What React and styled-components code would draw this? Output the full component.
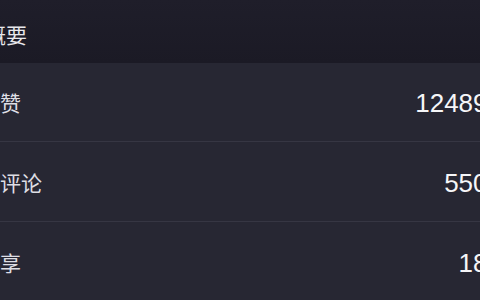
import React from "react";
import styled, { createGlobalStyle } from "styled-components";

const GlobalStyle = createGlobalStyle`
  html, body {
    margin: 0;
    padding: 0;
    background: #262632;
    overflow: hidden;
  }
  body {
    font-family: "Liberation Sans", "Noto Sans CJK SC", sans-serif;
  }
`;

const Panel = styled.div`
  margin-left: -21px;
  width: 523px;
  height: 300px;
  display: flex;
  flex-direction: column;
  background: #262632;
`;

const Header = styled.div`
  height: 63px;
  flex: none;
  display: flex;
  align-items: center;
  padding: 4px 0 0 6px;
  box-sizing: border-box;
  background: linear-gradient(#1f1e2a, #1b1a25);
  color: #e8e8ec;
  font-family: "Noto Sans CJK SC", sans-serif;
  font-size: 21px;
`;

const Row = styled.div`
  height: ${props => props.h || 79}px;
  flex: none;
  box-sizing: border-box;
  display: flex;
  align-items: center;
  justify-content: space-between;
  border-bottom: 1px solid #363643;
  background: #272733;
`;

const Label = styled.span`
  font-family: "Noto Sans CJK SC", sans-serif;
  font-size: 21px;
  color: #dedee4;
`;

const Value = styled.span`
  font-family: "Liberation Sans", sans-serif;
  font-size: 26px;
  color: #f6f6f8;
  margin-top: 3px;
`;

const stats = [
  { label: "点赞", value: "124896", h: 79 },
  { label: "总评论", value: "5503", h: 80 },
  { label: "分享", value: "186", h: 80 }
];

export default function App() {
  return (
    <>
      <GlobalStyle />
      <Panel>
        <Header>概要</Header>
        {stats.map(s => (
          <Row key={s.label} h={s.h}>
            <Label>{s.label}</Label>
            <Value>{s.value}</Value>
          </Row>
        ))}
      </Panel>
    </>
  );
}
